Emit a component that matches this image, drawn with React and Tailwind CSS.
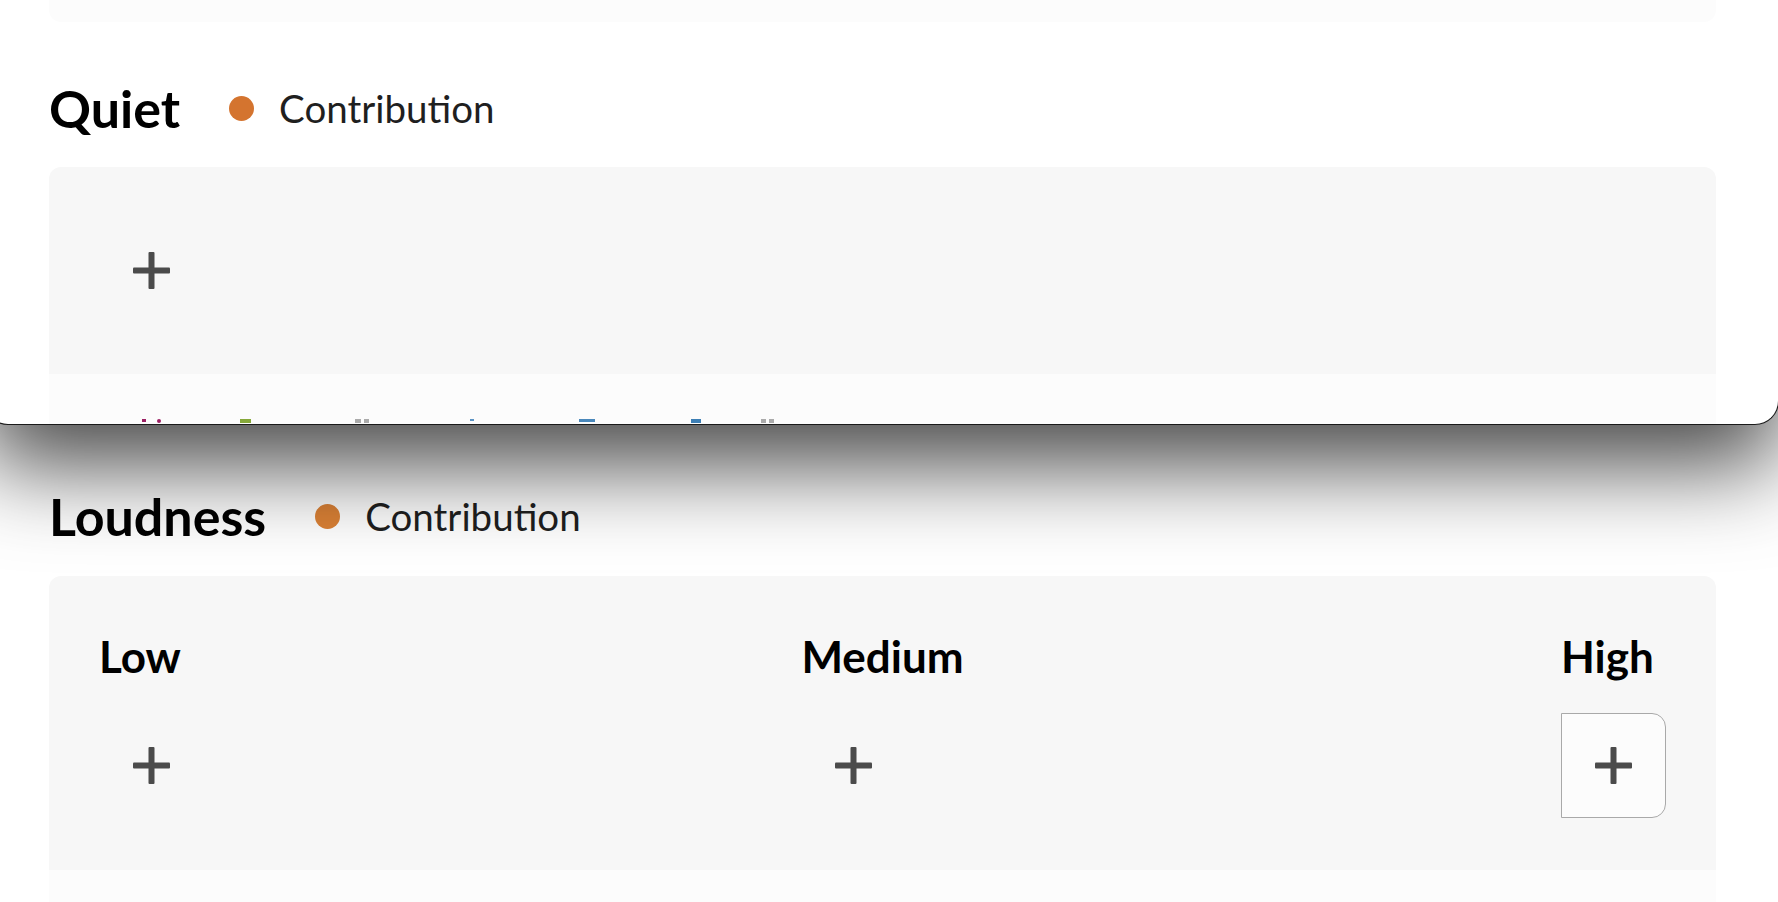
import React from 'react';

const Plus = () => (
  <svg width="37" height="37" viewBox="0 0 37 37" fill="#4b4b4b">
    <rect x="15.5" y="0" width="6" height="37" rx="1" />
    <rect x="0" y="15.5" width="37" height="6" rx="1" />
  </svg>
);

const AddButton = ({ active }) => (
  <button
    className={
      active
        ? 'flex h-[105px] w-[105px] items-center justify-center rounded-r-[14px] border-[1.5px] border-[#a9a9a9] bg-[#fcfcfc]'
        : 'flex h-[105px] w-[105px] items-center justify-center border-[1.5px] border-transparent'
    }
  >
    <Plus />
  </button>
);

const SectionHeading = ({ title, dot }) => (
  <div className="flex items-center">
    <h2 className="text-[52px] font-bold leading-[1.2] text-black">{title}</h2>
    <span className={`ml-[49px] h-[25px] w-[25px] rounded-full ${dot}`} />
    <span className="ml-[25px] text-[38.5px] leading-[1.2] text-[#1f1f1f]">Contribution</span>
  </div>
);

// tops of the legend glyphs peeking out under the overlay edge
const marks = [
  { left: 93, w: 4, h: 3, c: 'bg-[#9c2063]' },
  { left: 108, w: 4, h: 4, c: 'bg-[#9c2063] rounded-full' },
  { left: 191, w: 11, h: 4, c: 'bg-[#86a83a]' },
  { left: 306, w: 6, h: 4, c: 'bg-[#ababab]' },
  { left: 315, w: 5, h: 4, c: 'bg-[#ababab]' },
  { left: 421, w: 4, h: 2, c: 'bg-[#5b93c4]' },
  { left: 530, w: 16, h: 3, c: 'bg-[#4a88bb]' },
  { left: 642, w: 10, h: 4, c: 'bg-[#3d7fb5]' },
  { left: 712, w: 5, h: 4, c: 'bg-[#ababab]' },
  { left: 720, w: 5, h: 4, c: 'bg-[#ababab]' },
];

const App = () => {
  return (
    <div className="relative h-[902px] w-full overflow-hidden bg-white font-['Lato',sans-serif]">
      {/* Overlay panel covering the Quiet section */}
      <div className="relative z-10 -ml-[16px] h-[425px] w-[calc(100%+17px)] overflow-hidden rounded-b-[24px] border-x border-b border-[#1a1a1a] bg-white pl-[64px] pr-[62px] shadow-[0_40px_90px_rgba(0,0,0,0.72)]">
        <div className="h-[22px] rounded-b-[12px] bg-[#fcfcfc]" />

        <div className="mt-[55px]">
          <SectionHeading title="Quiet" dot="bg-[#d4742f]" />
        </div>

        <div className="mt-[28px] rounded-t-[12px] bg-[#f7f7f7] px-[50px] py-[51px]">
          <AddButton />
        </div>
        <div className="relative h-[80px] bg-[#fcfcfc]">
          {marks.map((m, i) => (
            <span
              key={i}
              className={`absolute top-[45px] ${m.c}`}
              style={{ left: m.left, width: m.w, height: m.h }}
            />
          ))}
        </div>
      </div>

      {/* Loudness section */}
      <div className="pl-[49px] pr-[62px]">
        <div className="mt-[60px]">
          <SectionHeading title="Loudness" dot="bg-[#dc8236]" />
        </div>

        <div className="mt-[29px] rounded-t-[12px] bg-[#f7f7f7] px-[50px] pb-[52px] pt-[54px]">
          <div className="flex justify-between">
            <div className="flex flex-col items-start">
              <span className="text-[44px] font-bold leading-[1.2] text-black">Low</span>
              <div className="mt-[30px]">
                <AddButton />
              </div>
            </div>
            <div className="flex flex-col items-start">
              <span className="text-[44px] font-bold leading-[1.2] text-black">Medium</span>
              <div className="mt-[30px]">
                <AddButton />
              </div>
            </div>
            <div className="flex flex-col items-start">
              <span className="text-[44px] font-bold leading-[1.2] text-black">High</span>
              <div className="mt-[30px]">
                <AddButton active />
              </div>
            </div>
          </div>
        </div>
        <div className="h-[60px] bg-[#fcfcfc]" />
      </div>
    </div>
  );
};

export default App;
